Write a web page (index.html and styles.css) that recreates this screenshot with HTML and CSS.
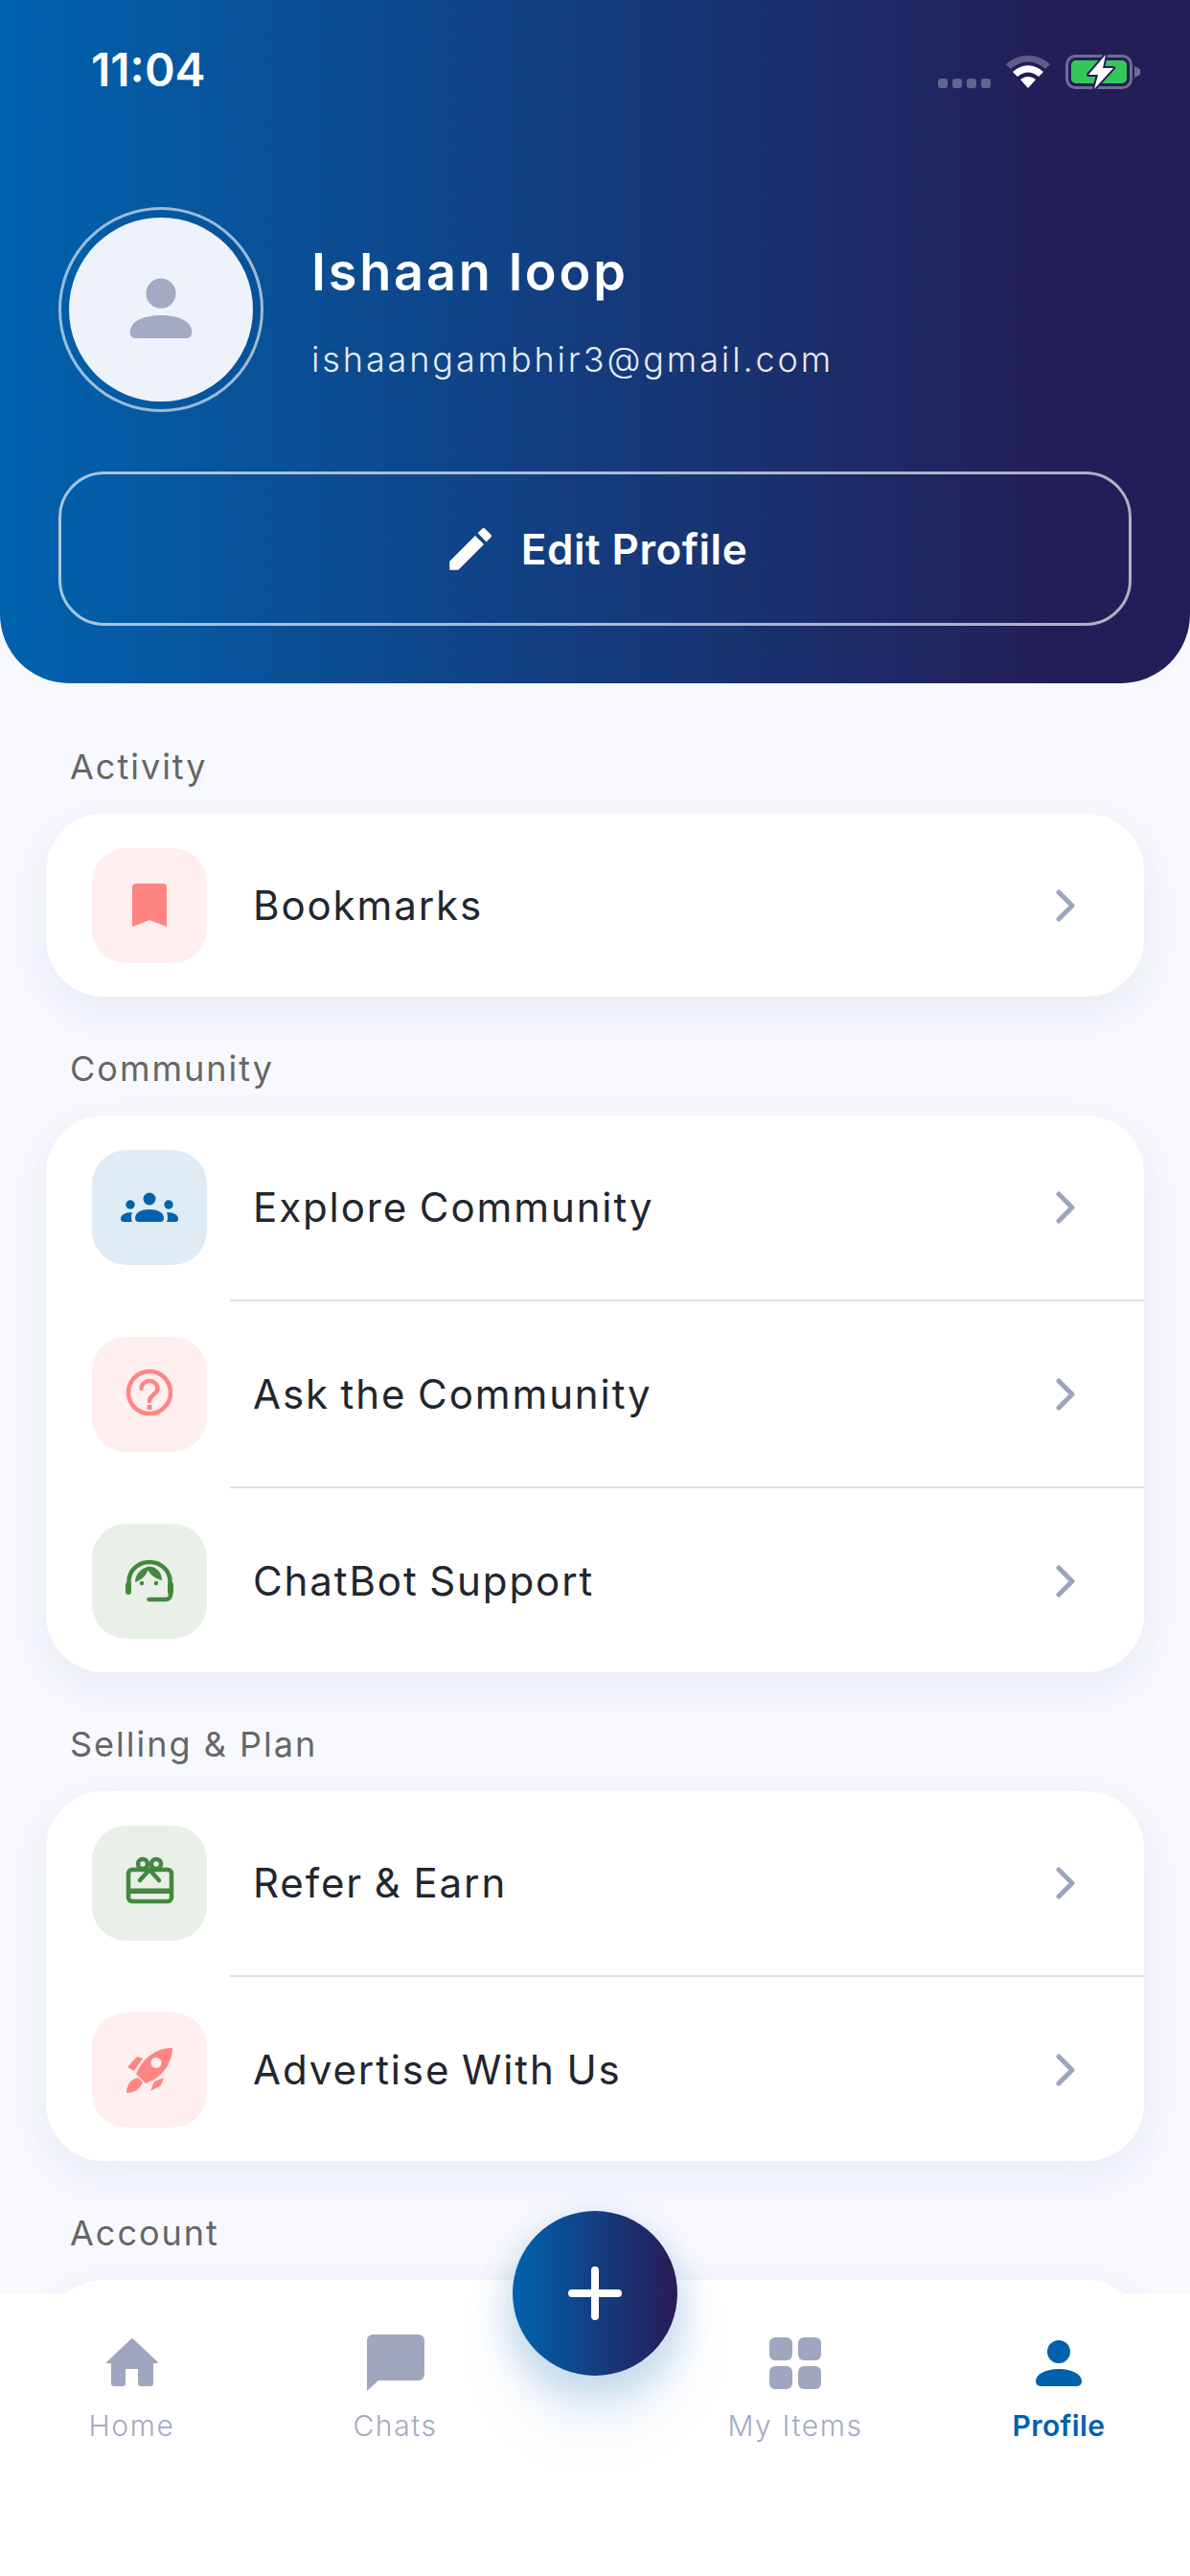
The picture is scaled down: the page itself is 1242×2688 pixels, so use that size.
FILE: index.html
```html
<!DOCTYPE html>
<html lang="en">
<head>
    <meta charset="UTF-8">
    <meta name="viewport" content="width=device-width, initial-scale=1.0">
    <title>Profile</title>
    <link rel="stylesheet" href="styles.css">
</head>

<body>
    <div class="screen">
        <header class="header">
            <div class="status-bar">
                <span class="time">11:04</span>
                <div class="status-icons">
                    <div class="signal"><i></i><i></i><i></i><i></i></div>
                    <svg class="wifi" width="48" height="36" viewBox="0 0 48 36">
                        <path d="M1 11C14-1 34-1 47 11l-5 5C31 6 17 6 6 16z" fill="#fff" opacity=".28"/>
                        <path d="M8 19c10-9 22-9 32 0l-5 5c-7-6-15-6-22 0z" fill="#fff"/>
                        <path d="M16 27c5-4 11-4 16 0l-8 9z" fill="#fff"/>
                    </svg>
                    <svg class="battery" width="80" height="38" viewBox="0 -1 80 38">
                        <rect x="1.500" y="1.500" width="67" height="33" rx="9" fill="none" stroke="#fff" stroke-opacity=".35" stroke-width="3"/>
                        <rect x="6" y="6" width="58" height="24" rx="5" fill="#34c759"/>
                        <path d="M72 12l6 3v6l-6 3z" fill="#fff" opacity=".35"/>
                        <path d="M42 0L24 21h10l-4 15 20-22H39z" fill="#fff" stroke="#1f1f5c" stroke-width="4" stroke-linejoin="round" paint-order="stroke"/>
                    </svg>
                </div>
            </div>

            <div class="user">
                <div class="avatar-ring">
                    <div class="avatar">
                        <svg width="72" height="72" viewBox="0 0 60 60">
                            <circle cx="30" cy="16" r="13"/>
                            <path d="M3 50c0-10 12-15 27-15s27 5 27 15a5 5 0 0 1-5 5H8a5 5 0 0 1-5-5z"/>
                        </svg>
                    </div>
                </div>
                <div class="user-info">
                    <div class="user-name">Ishaan loop</div>
                    <div class="user-email">ishaangambhir3@gmail.com</div>
                </div>
            </div>

            <button class="edit-button">
                <svg width="58" height="58" viewBox="0 0 24 24">
                    <path d="M3 17.250V21h3.750L17.810 9.940l-3.750-3.750L3 17.250zM20.710 7.040a1 1 0 0 0 0-1.410l-2.340-2.340a1 1 0 0 0-1.410 0l-1.830 1.830 3.750 3.750 1.830-1.830z" fill="#fff"/>
                </svg>
                Edit Profile
            </button>
        </header>

        <main class="content">
            <h2 class="section-label">Activity</h2>
            <section class="card">
                <div class="row">
                    <div class="tile tile-red">
                        <svg viewBox="0 0 120 120"><path d="M46 37h28a4 4 0 0 1 4 4v41l-18-7-18 7V41a4 4 0 0 1 4-4z"/></svg>
                    </div>
                    <span class="row-text">Bookmarks</span>
                    <svg class="chevron" width="24" height="34" viewBox="0 0 24 34"><path d="M4 3l14 14L4 31"/></svg>
                </div>
            </section>

            <h2 class="section-label">Community</h2>
            <section class="card">
                <div class="row">
                    <div class="tile tile-blue">
                        <svg viewBox="0 0 120 120">
                            <circle cx="60" cy="51" r="6.500"/>
                            <circle cx="40" cy="57" r="4.700"/>
                            <circle cx="80" cy="57" r="4.700"/>
                            <path d="M45 71c0-6 7-9 15-9s15 3 15 9a4 4 0 0 1-4 4H49a4 4 0 0 1-4-4z"/>
                            <path d="M30 72c0-4 4-7 12-7-1 2-1.500 7 0 10H33a3 3 0 0 1-3-3z"/>
                            <path d="M90 72c0-4-4-7-12-7 1 2 1.500 7 0 10h9a3 3 0 0 0 3-3z"/>
                        </svg>
                    </div>
                    <span class="row-text">Explore Community</span>
                    <svg class="chevron" width="24" height="34" viewBox="0 0 24 34"><path d="M4 3l14 14L4 31"/></svg>
                </div>
                <div class="row">
                    <div class="tile tile-red">
                        <svg viewBox="0 0 120 120">
                            <g class="line">
                                <circle cx="60" cy="58" r="22"/>
                                <path d="M51.500 54a8.500 8 0 0 1 17 0c0 6-8.500 6-8.500 13"/>
                            </g>
                            <rect x="57.500" y="71" width="5" height="5"/>
                        </svg>
                    </div>
                    <span class="row-text">Ask the Community</span>
                    <svg class="chevron" width="24" height="34" viewBox="0 0 24 34"><path d="M4 3l14 14L4 31"/></svg>
                </div>
                <div class="row">
                    <div class="tile tile-green">
                        <svg viewBox="0 0 120 120">
                            <g class="line">
                                <path d="M38.500 63v-3a21.500 20 0 0 1 43 0v3"/>
                                <path d="M82 70v4a5 5 0 0 1-5 5H59.500"/>
                            </g>
                            <rect x="35" y="61" width="6" height="13" rx="3"/>
                            <rect x="79" y="61" width="6" height="13" rx="3"/>
                            <path d="M45 61c0-8 6-15 14-16-1 8-6 13-14 16z"/>
                            <path d="M57 45c9-2 16 5 16 14-8-2-14-7-16-14z"/>
                            <circle cx="52" cy="62" r="2.200"/>
                            <circle cx="67" cy="62" r="2.200"/>
                        </svg>
                    </div>
                    <span class="row-text">ChatBot Support</span>
                    <svg class="chevron" width="24" height="34" viewBox="0 0 24 34"><path d="M4 3l14 14L4 31"/></svg>
                </div>
            </section>

            <h2 class="section-label">Selling &amp; Plan</h2>
            <section class="card">
                <div class="row">
                    <div class="tile tile-green">
                        <svg viewBox="0 0 120 120">
                            <g class="line">
                                <rect x="38" y="46" width="45" height="33" rx="4"/>
                                <circle cx="53" cy="40" r="5"/>
                                <circle cx="67" cy="40" r="5"/>
                                <path d="M60 46L50 57M60 46l10 11"/>
                            </g>
                            <rect x="38" y="65.500" width="45" height="5.500"/>
                        </svg>
                    </div>
                    <span class="row-text">Refer &amp; Earn</span>
                    <svg class="chevron" width="24" height="34" viewBox="0 0 24 34"><path d="M4 3l14 14L4 31"/></svg>
                </div>
                <div class="row">
                    <div class="tile tile-red">
                        <svg viewBox="0 0 120 120">
                            <path fill-rule="evenodd" d="M84 37c-14 0-26 7-34 19l-4 8 10 10 9-4c12-8 19-20 19-33zM67 47a5.500 5.500 0 1 1 0 11 5.500 5.500 0 0 1 0-11z"/>
                            <path d="M36 84c0-8 4-14 12-16l5 5c-3 7-9 11-17 11z"/>
                            <path d="M37 57l10-11 6 2-9 13z"/>
                            <path d="M61 82l4-10 10-4-3 8z"/>
                        </svg>
                    </div>
                    <span class="row-text">Advertise With Us</span>
                    <svg class="chevron" width="24" height="34" viewBox="0 0 24 34"><path d="M4 3l14 14L4 31"/></svg>
                </div>
            </section>

            <h2 class="section-label">Account</h2>
            <section class="card card-cut"></section>
        </main>

        <nav class="bottom-nav">
            <div class="nav-item">
                <svg width="60" height="60" viewBox="0 0 60 60">
                    <path d="M28.500 6a2 2 0 0 1 3 0l25 23.500c.8.8.3 1.500-.5 1.500h-4v21a3 3 0 0 1-3 3H39a3 3 0 0 1-3-3V37H23v15a3 3 0 0 1-3 3h-9a3 3 0 0 1-3-3V31H4c-.8 0-1.300-.7-.5-1.500z"/>
                </svg>
                <span>Home</span>
            </div>
            <div class="nav-item">
                <svg width="60" height="60" viewBox="0 0 60 60">
                    <path d="M6 1h48a6 6 0 0 1 6 6v36a6 6 0 0 1-6 6H12L0 60V7a6 6 0 0 1 6-6z"/>
                </svg>
                <span>Chats</span>
            </div>
            <div></div>
            <div class="nav-item">
                <svg width="60" height="60" viewBox="0 0 60 60">
                    <rect x="3" y="4" width="24" height="24" rx="6"/>
                    <rect x="33" y="4" width="24" height="24" rx="6"/>
                    <rect x="3" y="34" width="24" height="24" rx="6"/>
                    <rect x="33" y="34" width="24" height="24" rx="6"/>
                </svg>
                <span>My Items</span>
            </div>
            <div class="nav-item nav-active">
                <svg width="60" height="60" viewBox="0 0 60 60">
                    <circle cx="30" cy="19" r="12"/>
                    <path d="M6 50c0-8 11-13 24-13s24 5 24 13a5 5 0 0 1-5 5H11a5 5 0 0 1-5-5z"/>
                </svg>
                <span>Profile</span>
            </div>
            <button class="fab">
                <svg width="56" height="56" viewBox="0 0 56 56"><path d="M28 4v48M4 28h48"/></svg>
            </button>
        </nav>
    </div>
</body>

</html>
```

FILE: styles.css
```css
* {
    box-sizing: border-box;
}

body {
    margin: 0;
    background-color: #f8f9fe;
    font-family: Inter, 'Noto Sans', sans-serif;
}

.screen {
    position: relative;
    width: 1242px;
    height: 2688px;
    overflow: hidden;
    background-color: #f8f9fe;
}

.header {
    height: 713px;
    padding: 0 61px;
    border-radius: 0 0 72px 72px;
    background: linear-gradient(90deg, #0062ae, #231e57 88%);
    color: #fff;
}

.status-bar {
    display: flex;
    justify-content: space-between;
    height: 216px;
    padding: 46px 0 0 34px;
}

.time {
    font-size: 48px;
    font-weight: 600;
    line-height: 54px;
}

.status-icons {
    display: flex;
    align-items: flex-start;
    gap: 15px;
    margin-top: 10px;
    margin-right: -11px;
}

.signal {
    display: flex;
    gap: 5px;
    margin-top: 26px;
}

.signal i {
    width: 10px;
    height: 10px;
    border-radius: 3px;
    background-color: rgba(255, 255, 255, 0.3);
}

.user {
    display: flex;
    align-items: center;
    gap: 50px;
}

.avatar-ring {
    display: flex;
    align-items: center;
    justify-content: center;
    width: 214px;
    height: 214px;
    border: 3px solid rgba(255, 255, 255, 0.6);
    border-radius: 50%;
}

.avatar {
    display: flex;
    align-items: center;
    justify-content: center;
    width: 192px;
    height: 192px;
    border-radius: 50%;
    background-color: #eef2fb;
}

.avatar svg {
    fill: #a3abc4;
}

.user-name {
    margin-top: 2px;
    font-size: 54px;
    font-weight: 600;
    line-height: 70px;
    letter-spacing: 2.8px;
}

.user-email {
    margin-top: 31px;
    font-size: 36px;
    font-weight: 300;
    line-height: 50px;
    letter-spacing: 2.9px;
    opacity: 0.9;
}

.edit-button {
    display: flex;
    align-items: center;
    justify-content: center;
    gap: 24px;
    width: 1120px;
    height: 161px;
    margin-top: 62px;
    padding: 0;
    border: 3px solid rgba(255, 255, 255, 0.65);
    border-radius: 48px;
    background: none;
    color: #fff;
    font-family: inherit;
    font-size: 44px;
    font-weight: 600;
    letter-spacing: 0.5px;
}

.content {
    padding: 62px 48px 0;
}

.section-label {
    margin: 50px 0 24px 25px;
    font-size: 36px;
    font-weight: 400;
    line-height: 50px;
    letter-spacing: 2px;
    color: #666;
}

.section-label:first-child {
    margin-top: 0;
}

.card {
    border-radius: 60px;
    background-color: #fff;
    box-shadow: 0 14px 44px rgba(70, 80, 150, 0.09);
}

.card-cut {
    height: 400px;
}

.row {
    display: flex;
    align-items: center;
    padding: 36px 48px 36px;
    position: relative;
}

.row + .row {
    padding-top: 39px;
}

.row:last-child {
    padding-bottom: 35px;
}

/* separator starts after the icon tile and runs to the card edge */
.row + .row::before {
    content: "";
    position: absolute;
    top: 0;
    left: 192px;
    right: 0;
    height: 2px;
    background-color: #dfe1e4;
}

.tile {
    flex: none;
    width: 120px;
    height: 120px;
    border-radius: 36px;
}

.tile svg {
    display: block;
    width: 120px;
    height: 120px;
    fill: currentColor;
}

.tile-red {
    background-color: #ffefee;
    color: #ff8583;
}

.tile-blue {
    background-color: #dfebf5;
    color: #0062ae;
}

.tile-green {
    background-color: #e8f0e7;
    color: #43883f;
}

.tile .line {
    fill: none;
    stroke: currentColor;
    stroke-width: 4.5;
    stroke-linecap: round;
    stroke-linejoin: round;
}

.row-text {
    flex: 1;
    margin-bottom: 2px;
    margin-left: 48px;
    font-size: 42px;
    font-weight: 400;
    letter-spacing: 1.9px;
    word-spacing: -2px;
    color: #22262e;
}

.chevron {
    flex: none;
    margin-right: 21px;
    fill: none;
    stroke: #9da5be;
    stroke-width: 5;
    stroke-linecap: round;
    stroke-linejoin: round;
}

.bottom-nav {
    position: absolute;
    left: 0;
    right: 0;
    bottom: 0;
    display: grid;
    grid-template-columns: 275px 275px 142px 276px 274px;
    align-items: start;
    height: 295px;
    padding-top: 42px;
    background-color: #fff;
}

.nav-item {
    display: flex;
    flex-direction: column;
    align-items: center;
    gap: 16px;
    color: #a3abc4;
    font-size: 30px;
    font-weight: 300;
    line-height: 40px;
    letter-spacing: 1.6px;
}

.nav-item svg {
    fill: #9fa7bf;
}

.nav-active {
    color: #0062ae;
    font-weight: 600;
    letter-spacing: 0.4px;
}

.nav-active svg {
    fill: #0062ae;
}

.fab {
    position: absolute;
    top: -86px;
    left: 535px;
    display: flex;
    align-items: center;
    justify-content: center;
    width: 172px;
    height: 172px;
    padding: 0;
    border: none;
    border-radius: 50%;
    background: linear-gradient(90deg, #0062ae, #271b55);
    box-shadow: 0 14px 30px 10px rgba(0, 98, 174, 0.16), 0 50px 60px 10px rgba(0, 98, 174, 0.07);
}

.fab svg {
    fill: none;
    stroke: #fff;
    stroke-width: 8;
    stroke-linecap: round;
}
```
